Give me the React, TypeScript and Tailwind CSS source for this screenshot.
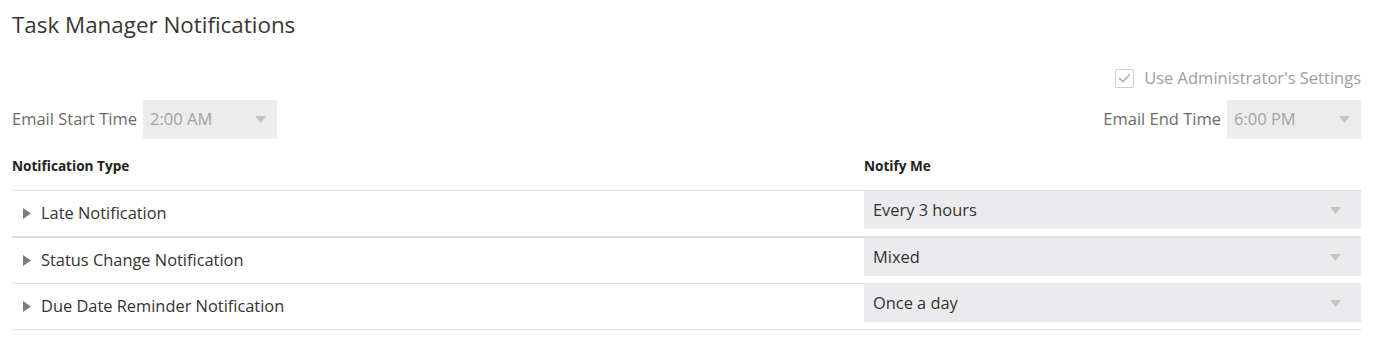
import { ChevronDown } from 'lucide-react';

const rows = [
  { name: 'Late Notification', value: 'Every 3 hours', thick: true },
  { name: 'Status Change Notification', value: 'Mixed', thick: false },
  { name: 'Due Date Reminder Notification', value: 'Once a day', thick: false },
];

function Caret({ className = '' }: { className?: string }) {
  return (
    <svg width="11" height="7" viewBox="0 0 11 7" className={className}>
      <path d="M0 0 H11 L5.5 7 Z" fill="#c4c4c4" />
    </svg>
  );
}

function TimeSelect({ value }: { value: string }) {
  return (
    <div className="flex h-[39px] w-[134px] items-center justify-between rounded-[2px] bg-[#ececec] pl-[7px] pr-[11px] text-[16.5px] text-[#a3a3a3]">
      <span>{value}</span>
      <Caret />
    </div>
  );
}

export default function App() {
  void ChevronDown;
  return (
    <div className="h-[348px] w-[1379px] bg-white pl-[12px] pr-[18px] font-['Open_Sans',sans-serif] text-[#333]">
      <h1 className="pt-[10px] text-[22.4px] leading-[30px] text-[#3a3632]">Task Manager Notifications</h1>

      <div className="mt-[28px] flex items-center justify-end gap-[10px]">
        <span className="flex h-[19px] w-[19px] items-center justify-center rounded-[2px] border border-[#cfcfcf]">
          <svg width="13" height="10" viewBox="0 0 13 10">
            <path d="M1 5 L5 8.5 L12 1" fill="none" stroke="#b5b5b5" strokeWidth="1.8" />
          </svg>
        </span>
        <span className="text-[16.5px] leading-[20px] text-[#9e9e9e]">Use Administrator's Settings</span>
      </div>

      <div className="mt-[12px] flex items-center justify-between">
        <div className="flex items-center gap-[6px]">
          <span className="text-[16.5px] text-[#6b6b6b]">Email Start Time</span>
          <TimeSelect value="2:00 AM" />
        </div>
        <div className="flex items-center gap-[6px]">
          <span className="text-[16.5px] text-[#6b6b6b]">Email End Time</span>
          <TimeSelect value="6:00 PM" />
        </div>
      </div>

      <div className="mt-[18px] flex pb-[15px] text-[13.6px] font-bold leading-[18px] text-[#222]">
        <div className="w-[852px]">Notification Type</div>
        <div>Notify Me</div>
      </div>

      <div className="border-t border-[#e0e0e0]">
        {rows.map((r) => (
          <div
            key={r.name}
            className={`flex ${r.thick ? 'h-[47px] border-b-2 border-[#dcdcdc]' : 'h-[46px] border-b border-[#e0e0e0]'}`}
          >
            <div className="flex w-[852px] items-center pl-[11px]">
              <svg width="8" height="11" viewBox="0 0 8 11" className="mr-[10px]">
                <path d="M0 0 L8 5.5 L0 11 Z" fill="#7d7d7d" />
              </svg>
              <span className="text-[16.4px] text-[#333]">{r.name}</span>
            </div>
            <div className="flex h-[38px] flex-1 items-center justify-between bg-[#ebebed] pl-[9px] pr-[20px]">
              <span className="text-[16.4px] text-[#333]">{r.value}</span>
              <Caret />
            </div>
          </div>
        ))}
      </div>
    </div>
  );
}
